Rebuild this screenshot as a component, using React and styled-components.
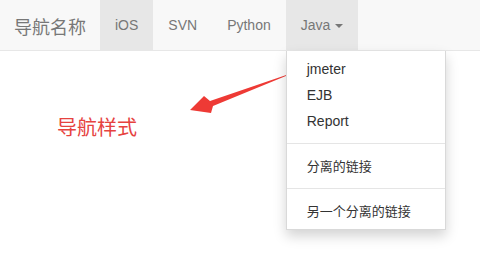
import React from 'react'
import styled, { createGlobalStyle } from 'styled-components'

const GlobalStyle = createGlobalStyle`
    body {
        margin: 0;
        background: #fff;
        font-family: "Liberation Sans", "Noto Sans CJK SC", sans-serif;
        font-size: 14px;
        line-height: 1.42857;
        color: #333;
    }
`

const Page = styled.div`
    position: relative;
    width: 480px;
    height: 262px;
    overflow: hidden;
`

const Navbar = styled.nav`
    display: flex;
    height: 50px;
    background: #f8f8f8;
    border-bottom: 1px solid #e7e7e7;
`

const Brand = styled.a`
    padding: 16px 14px 0 14px;
    font-size: 18px;
    line-height: 20px;
    color: #777;
    font-family: "Noto Sans CJK SC", sans-serif;
`

const NavList = styled.ul`
    display: flex;
    margin: 0;
    padding: 0;
    list-style: none;
`

const NavItem = styled.li`
    position: relative;
    display: flex;
    align-items: center;
    padding: 2px 15px 0;
    height: 50px;
    box-sizing: border-box;
    color: #777;
    font-size: 14px;
    background: ${p => (p.active ? '#e7e7e7' : 'transparent')};
`

const Caret = styled.span`
    display: inline-block;
    width: 0;
    height: 0;
    margin-left: 5px;
    border-top: 4px solid #777;
    border-left: 4px solid transparent;
    border-right: 4px solid transparent;
`

const Menu = styled.ul`
    position: absolute;
    top: 51px;
    left: 0;
    z-index: 10;
    min-width: 160px;
    margin: 0;
    padding: 5px 0;
    list-style: none;
    background: #fff;
    border: 1px solid rgba(0, 0, 0, 0.15);
    border-top: 0;
    box-shadow: 0 6px 12px rgba(0, 0, 0, 0.175);
    box-sizing: border-box;
`

const MenuItem = styled.li`
    padding: 3px 20px;
    line-height: 20px;
    color: #333;
    white-space: nowrap;
    font-family: ${p => (p.cjk ? '"Noto Sans CJK SC", sans-serif' : 'inherit')};
    font-size: ${p => (p.cjk ? '13px' : '14px')};
`

const Divider = styled.li`
    height: 1px;
    margin: 9px 0;
    background: #e5e5e5;
`

const Content = styled.main`
    padding: 64px 0 0 57px;
`

const Label = styled.span`
    color: #e6433f;
    font-size: 20px;
    font-family: "Noto Sans CJK SC", sans-serif;
    line-height: 24px;
`

const Arrow = styled.svg`
    position: absolute;
    left: 0;
    top: 0;
    pointer-events: none;
`

function App() {
    return (
        <Page>
            <GlobalStyle />
            <Navbar>
                <Brand>导航名称</Brand>
                <NavList>
                    <NavItem active>iOS</NavItem>
                    <NavItem>SVN</NavItem>
                    <NavItem>Python</NavItem>
                    <NavItem active>
                        Java <Caret />
                        <Menu>
                            <MenuItem>jmeter</MenuItem>
                            <MenuItem>EJB</MenuItem>
                            <MenuItem>Report</MenuItem>
                            <Divider />
                            <MenuItem cjk>分离的链接</MenuItem>
                            <Divider />
                            <MenuItem cjk>另一个分离的链接</MenuItem>
                        </Menu>
                    </NavItem>
                </NavList>
            </Navbar>
            <Content>
                <Label>导航样式</Label>
            </Content>
            {/* annotation arrow */}
            <Arrow width="480" height="262" viewBox="0 0 480 262">
                <polygon points="190,110 204,96 210,101 298,71 213,106 211,113" fill="#ee3a35" />
            </Arrow>
        </Page>
    )
}

export default App
